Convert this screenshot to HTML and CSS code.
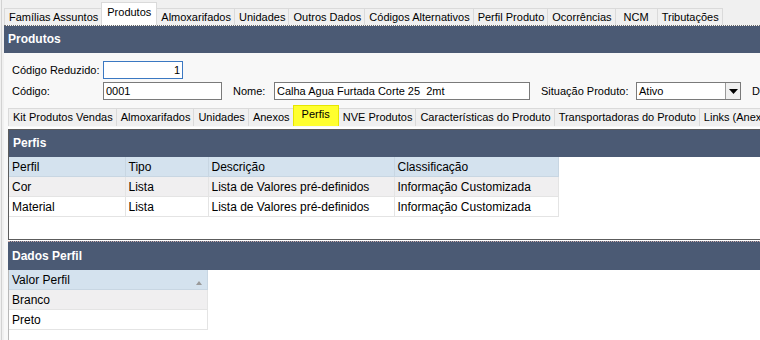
FILE: index.html
```html
<!DOCTYPE html>
<html lang="pt">
<head>
  <meta charset="UTF-8">
  <title>Produtos</title>
  <link rel="stylesheet" href="styles.css">
</head>
<body>
  <div class="window">
    <nav class="tabs top-tabs">
      <span class="tab">Famílias Assuntos</span>
      <span class="tab active">Produtos</span>
      <span class="tab">Almoxarifados</span>
      <span class="tab">Unidades</span>
      <span class="tab">Outros Dados</span>
      <span class="tab">Códigos Alternativos</span>
      <span class="tab">Perfil Produto</span>
      <span class="tab">Ocorrências</span>
      <span class="tab tab-ncm">NCM</span>
      <span class="tab">Tributações</span>
    </nav>

    <section class="panel">
      <h2 class="bar">Produtos</h2>
      <div class="form">
        <div class="row">
          <label class="lbl lbl-first">Código Reduzido:</label>
          <input class="field field-reduz" value="1">
        </div>
        <div class="row">
          <label class="lbl lbl-first">Código:</label>
          <input class="field field-cod" value="0001">
          <label class="lbl lbl-nome">Nome:</label>
          <input class="field field-nome" value="Calha Agua Furtada Corte 25  2mt">
          <label class="lbl lbl-sit">Situação Produto:</label>
          <div class="combo">
            <span class="combo-text">Ativo</span>
            <span class="combo-btn"><svg width="9" height="5" viewBox="0 0 9 5"><path d="M0 0h9L4.5 5z" fill="#000"/></svg></span>
          </div>
          <label class="lbl lbl-d">D</label>
        </div>
      </div>

      <nav class="tabs sub-tabs">
        <span class="tab">Kit Produtos Vendas</span>
        <span class="tab">Almoxarifados</span>
        <span class="tab">Unidades</span>
        <span class="tab">Anexos</span>
        <span class="tab active yellow">Perfis</span>
        <span class="tab">NVE Produtos</span>
        <span class="tab">Características do Produto</span>
        <span class="tab">Transportadoras do Produto</span>
        <span class="tab">Links (Anexos)</span>
      </nav>

      <div class="inner">
        <section class="grid-box">
          <h3 class="bar">Perfis</h3>
          <table class="grid grid-perfis">
            <colgroup>
              <col class="c-perfil"><col class="c-tipo"><col class="c-desc"><col class="c-class">
            </colgroup>
            <tr class="head"><td>Perfil</td><td>Tipo</td><td>Descrição</td><td>Classificação</td></tr>
            <tr class="alt"><td>Cor</td><td>Lista</td><td>Lista de Valores pré-definidos</td><td>Informação Customizada</td></tr>
            <tr><td>Material</td><td>Lista</td><td>Lista de Valores pré-definidos</td><td>Informação Customizada</td></tr>
          </table>
        </section>

        <section class="dados">
          <h3 class="bar">Dados Perfil</h3>
          <table class="grid grid-valor">
            <tr class="head"><td>Valor Perfil<span class="sort"></span></td></tr>
            <tr class="alt"><td>Branco</td></tr>
            <tr><td>Preto</td></tr>
          </table>
        </section>
      </div>
    </section>
  </div>
</body>
</html>
```

FILE: styles.css
```css
body {
  margin: 0;
  width: 760px;
  height: 340px;
  overflow: hidden;
  background: #f0f0f0;
  font-family: "Liberation Sans", Arial, sans-serif;
  font-size: 11px;
  color: #000;
}
.window {
  margin-left: 1px;
  border-left: 1px solid #d2d2d2;
  padding-left: 2px;
  height: 340px;
  overflow: hidden;
}

/* tab strips */
.tabs {
  display: flex;
  align-items: flex-end;
  white-space: nowrap;
}
.tab {
  height: 16px;
  line-height: 16px;
  padding: 0 3px 0 4px;
  border-top: 1px solid #dadada;
  border-right: 1px solid #dadada;
  background: #f0f0f0;
  flex: none;
}
.tab:first-child {
  border-left: 1px solid #dadada;
}
.tab.active {
  height: 22px;
  line-height: 18px;
  background: #fff;
  border-left: 1px solid #dadada;
  margin-left: -1px;
  padding: 0 5px;
  align-self: flex-end;
}
.tab-ncm {
  padding: 0 8px;
}
.top-tabs {
  height: 25px;
}

/* panels */
.panel {
  border-top: 1px dotted #6b6b6b;
  background: #f8f8f8;
  height: 314px;
}
.bar {
  margin: 0;
  height: 27px;
  line-height: 27px;
  padding-left: 4px;
  background: #4b5a74;
  color: #fff;
  font-size: 12px;
  font-weight: bold;
  white-space: nowrap;
}

/* form */
.form {
  display: flex;
  flex-direction: column;
  gap: 3px;
  padding: 8px 0 6px 8px;
}
.row {
  display: flex;
  align-items: center;
  height: 18px;
  white-space: nowrap;
}
.lbl {
  flex: none;
}
.lbl-first {
  width: 91px;
}
.lbl-nome {
  margin-left: 11px;
  width: 41px;
}
.lbl-sit {
  margin-left: 11px;
  width: 95px;
}
.lbl-d {
  margin-left: 11px;
}
.field {
  box-sizing: border-box;
  flex: none;
  height: 18px;
  margin: 0;
  padding: 0 2px;
  border: 1px solid #7a7a7a;
  background: #fff;
  font-family: "Liberation Sans", Arial, sans-serif;
  font-size: 11px;
  color: #000;
  outline: none;
}
.field-reduz {
  width: 80px;
  text-align: right;
  border-color: #3b78c2;
}
.field-cod {
  width: 119px;
}
.field-nome {
  width: 256px;
}
.combo {
  box-sizing: border-box;
  flex: none;
  display: flex;
  width: 105px;
  height: 18px;
  border: 1px solid #7a7a7a;
  background: #fff;
}
.combo-text {
  flex: 1;
  padding-left: 2px;
  line-height: 16px;
}
.combo-btn {
  width: 14px;
  border-left: 1px solid #9a9a9a;
  background: #f0f0f0;
  display: flex;
  align-items: center;
  justify-content: center;
}

/* sub tabs */
.sub-tabs {
  height: 21px;
  margin-left: 4px;
}
.sub-tabs .tab {
  height: 17px;
  line-height: 17px;
  margin-bottom: 1px;
}
.sub-tabs .tab.active {
  height: 20px;
  line-height: 17px;
  margin-bottom: 1px;
  padding: 0 8px;
}
.tab.yellow {
  background: #ffff2e;
  border-color: #e6e600;
}

.inner {
  margin-left: 4px;
  padding-top: 2px;
  background: #fff;
}
.grid-box {
  border: 1px solid #5c5c5c;
  border-right: none;
  height: 109px;
  background: #fff;
}

/* grids */
.grid {
  border-collapse: collapse;
  table-layout: fixed;
  font-size: 12px;
}
.grid td {
  height: 19px;
  padding: 0 3px;
  border-right: 1px solid #e4e4e4;
  border-bottom: 1px solid #e4e4e4;
  white-space: nowrap;
  overflow: hidden;
}
.grid .head td {
  background: #d4e2ee;
  border-color: #c8d6e2;
}
.grid .alt td {
  background: #f0eff0;
}
.grid-perfis {
  width: 549px;
}
.c-perfil { width: 116px; }
.c-tipo { width: 83px; }
.c-desc { width: 186px; }
.c-class { width: 164px; }

.dados {
  margin-top: 1px;
  border-left: 1px solid #b8b8b8;
  height: 99px;
  background: #fff;
}
.dados .bar {
  border-top: 1px dotted #c9a9a9;
  height: 28px;
  line-height: 28px;
  margin-left: -1px;
}
.grid-valor {
  width: 199px;
}
.sort {
  float: right;
  margin: 8px 2px 0 0;
  border-left: 3px solid transparent;
  border-right: 3px solid transparent;
  border-bottom: 4px solid #9a9a9a;
}
```
